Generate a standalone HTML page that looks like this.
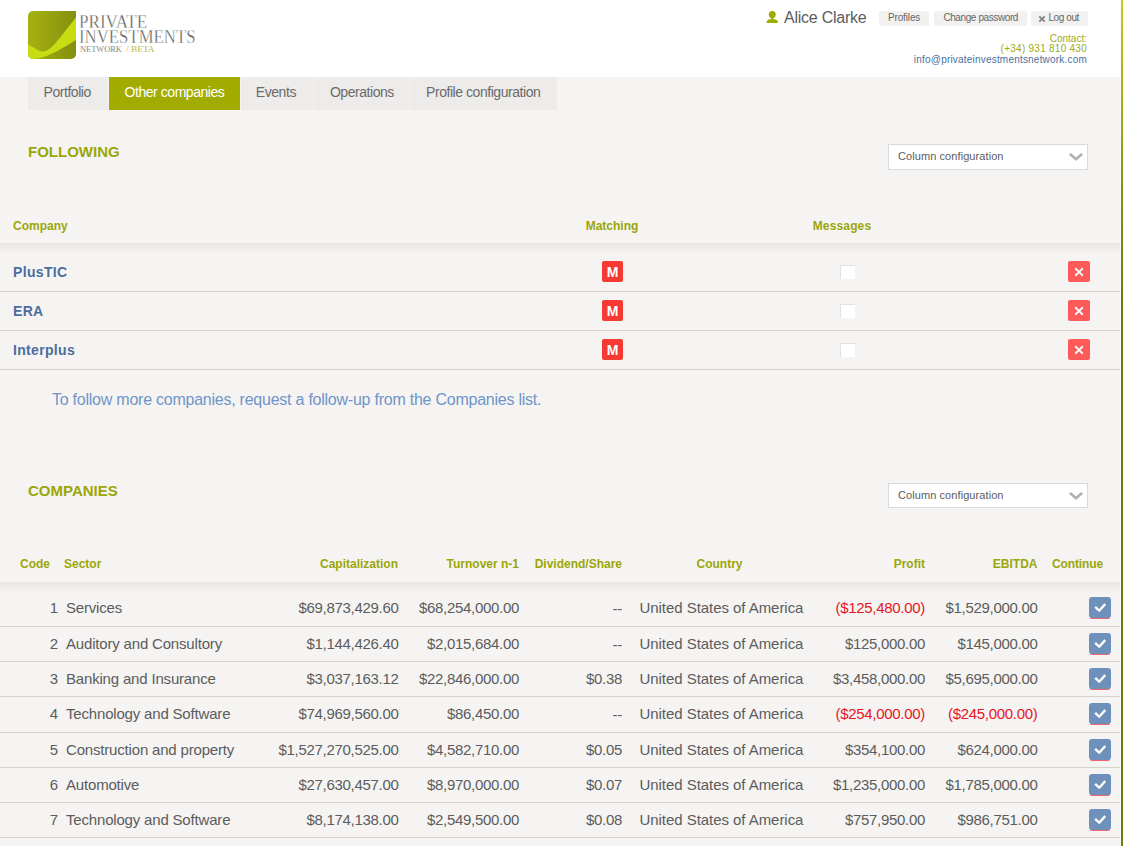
<!DOCTYPE html>
<html><head><meta charset="utf-8"><style>
html,body{margin:0;padding:0;}
body{width:1123px;height:846px;overflow:hidden;position:relative;background:#f5f4f2;font-family:"Liberation Sans",sans-serif;}
.t{position:absolute;white-space:nowrap;}
</style></head><body>
<div style="position:absolute;left:0px;top:0px;width:1121px;height:77px;background:#fff;"></div>
<div style="position:absolute;left:1120px;top:0px;width:1px;height:846px;background:#fafafc;"></div>
<div style="position:absolute;left:1121px;top:0px;width:2px;height:846px;background:linear-gradient(#c4ce12 0px,#a5b010 98px,#84900e 198px,#717c0a 300px,#717c0a 846px);"></div>
<svg style="position:absolute;left:28px;top:11px" width="48" height="48" viewBox="0 0 48 48">
<defs><linearGradient id="lg" x1="0" x2="1" y1="0" y2="0"><stop offset="0" stop-color="#a6b212"/><stop offset="1" stop-color="#858f0e"/></linearGradient>
<clipPath id="cp"><path d="M5 0H48V43A5 5 0 0 1 43 48H5A5 5 0 0 1 0 43V5A5 5 0 0 1 5 0Z"/></clipPath></defs>
<g clip-path="url(#cp)"><rect width="48" height="48" fill="url(#lg)"/>
<path d="M0 33.5C6 36 10 40.5 15 40.5C24 40.5 33 24 48 6.5V29C36 36 22 46 6 48H0Z" fill="#c8dc14"/></g></svg>
<div class="t" style="top:11.50px;font-size:19px;line-height:19px;font-weight:400;color:#5e5e5e;left:79px;transform:scaleX(0.9);transform-origin:left;font-family:'Liberation Serif',serif;-webkit-text-stroke:0.35px #fff;">PRIVATE</div>
<div class="t" style="top:26.70px;font-size:19px;line-height:19px;font-weight:400;color:#5e5e5e;left:79px;transform:scaleX(0.883);transform-origin:left;font-family:'Liberation Serif',serif;-webkit-text-stroke:0.35px #fff;">INVESTMENTS</div>
<div class="t" style="top:44.70px;font-size:9px;line-height:9px;font-weight:400;color:#707070;left:79.5px;transform:scaleX(0.93);transform-origin:left;font-family:'Liberation Serif',serif;-webkit-text-stroke:0.1px #fff;">NETWORK</div>
<div class="t" style="top:44.70px;font-size:9px;line-height:9px;font-weight:400;color:#a8b020;left:125.5px;transform:scaleX(1.04);transform-origin:left;font-family:'Liberation Serif',serif;-webkit-text-stroke:0.1px #fff;">/ BETA</div>
<svg style="position:absolute;left:766px;top:11px" width="13" height="12" viewBox="0 0 13 12">
<ellipse cx="6.25" cy="3.6" rx="3.5" ry="3.6" fill="#9ead00"/><rect x="5.2" y="6" width="2.1" height="3" fill="#9ead00"/><path d="M0.5 12C0.7 9.6 1.9 8.3 4.3 8.3H8.2C10.6 8.3 11.8 9.6 12 12Z" fill="#9ead00"/></svg>
<div class="t" style="top:9.90px;font-size:16px;line-height:16px;font-weight:400;color:#5c5c5c;letter-spacing:-0.25px;left:784px;">Alice Clarke</div>
<div style="position:absolute;left:879px;top:11px;width:50px;height:15px;background:#f2f1ef;border-radius:2px;"></div>
<div style="position:absolute;left:934px;top:11px;width:93px;height:15px;background:#f2f1ef;border-radius:2px;"></div>
<div style="position:absolute;left:1031px;top:11px;width:57px;height:15px;background:#f2f1ef;border-radius:2px;"></div>
<div class="t" style="top:12.50px;font-size:10px;line-height:10px;font-weight:400;color:#666;letter-spacing:-0.15px;left:888px;">Profiles</div>
<div class="t" style="top:12.50px;font-size:10px;line-height:10px;font-weight:400;color:#666;letter-spacing:-0.4px;left:943.4px;">Change password</div>
<div class="t" style="top:12.50px;font-size:10px;line-height:10px;font-weight:400;color:#666;letter-spacing:-0.4px;left:1048.4px;">Log out</div>
<svg style="position:absolute;left:1038px;top:15px" width="8" height="8" viewBox="0 0 8 8"><path d="M1.3 1.3L6.7 6.7M6.7 1.3L1.3 6.7" stroke="#858585" stroke-width="1.8"/></svg>
<div class="t" style="top:34.30px;font-size:10px;line-height:10px;font-weight:400;color:#a2a916;right:36px;text-align:right;">Contact:</div>
<div class="t" style="top:44.10px;font-size:10px;line-height:10px;font-weight:400;color:#a2a916;letter-spacing:0.26px;right:36px;text-align:right;">(+34) 931 810 430</div>
<div class="t" style="top:54.60px;font-size:10px;line-height:10px;font-weight:400;color:#4a6fa0;letter-spacing:0.2px;right:36px;text-align:right;">info@privateinvestmentsnetwork.com</div>
<div style="position:absolute;left:28px;top:77px;width:80px;height:33px;background:#edeceb;"></div>
<div class="t" style="top:84.70px;font-size:14px;line-height:14px;font-weight:400;color:#6a6a6a;letter-spacing:-0.45px;left:-132.8px;width:400px;text-align:center;">Portfolio</div>
<div style="position:absolute;left:109px;top:77px;width:131px;height:33px;background:#a2ac00;"></div>
<div class="t" style="top:84.70px;font-size:14px;line-height:14px;font-weight:400;color:#fff;letter-spacing:-0.45px;left:-25.5px;width:400px;text-align:center;">Other companies</div>
<div style="position:absolute;left:241px;top:77px;width:72px;height:33px;background:#edeceb;"></div>
<div class="t" style="top:84.70px;font-size:14px;line-height:14px;font-weight:400;color:#6a6a6a;letter-spacing:-0.45px;left:75.89999999999998px;width:400px;text-align:center;">Events</div>
<div style="position:absolute;left:314px;top:77px;width:95px;height:33px;background:#edeceb;"></div>
<div class="t" style="top:84.70px;font-size:14px;line-height:14px;font-weight:400;color:#6a6a6a;letter-spacing:-0.45px;left:161.89999999999998px;width:400px;text-align:center;">Operations</div>
<div style="position:absolute;left:410px;top:77px;width:147px;height:33px;background:#edeceb;"></div>
<div class="t" style="top:84.70px;font-size:14px;line-height:14px;font-weight:400;color:#6a6a6a;letter-spacing:-0.45px;left:283.2px;width:400px;text-align:center;">Profile configuration</div>
<div class="t" style="top:144.00px;font-size:15px;line-height:15px;font-weight:700;color:#9ba60a;left:28px;">FOLLOWING</div>
<div style="position:absolute;left:888px;top:144px;width:198px;height:24px;background:#fff;border:1px solid #dadada;"></div>
<div class="t" style="top:150.50px;font-size:11px;line-height:11px;font-weight:400;color:#5c5c5c;letter-spacing:0.08px;left:898px;">Column configuration</div>
<svg style="position:absolute;left:1069px;top:152px" width="14" height="10" viewBox="0 0 14 10"><path d="M1.6 2.6L7 7.3L12.4 2.6" stroke="#b0b0b0" stroke-width="2.6" fill="none" stroke-linecap="round" stroke-linejoin="round"/></svg>
<div class="t" style="top:483.00px;font-size:15px;line-height:15px;font-weight:700;color:#9ba60a;left:28px;">COMPANIES</div>
<div style="position:absolute;left:888px;top:483px;width:198px;height:23px;background:#fff;border:1px solid #dadada;"></div>
<div class="t" style="top:489.50px;font-size:11px;line-height:11px;font-weight:400;color:#5c5c5c;letter-spacing:0.08px;left:898px;">Column configuration</div>
<svg style="position:absolute;left:1069px;top:491px" width="14" height="10" viewBox="0 0 14 10"><path d="M1.6 2.6L7 7.3L12.4 2.6" stroke="#b0b0b0" stroke-width="2.6" fill="none" stroke-linecap="round" stroke-linejoin="round"/></svg>
<div class="t" style="top:220.00px;font-size:12px;line-height:12px;font-weight:700;color:#9ba60a;left:13px;">Company</div>
<div class="t" style="top:220.00px;font-size:12px;line-height:12px;font-weight:700;color:#9ba60a;left:412px;width:400px;text-align:center;">Matching</div>
<div class="t" style="top:220.00px;font-size:12px;line-height:12px;font-weight:700;color:#9ba60a;letter-spacing:0.15px;left:642px;width:400px;text-align:center;">Messages</div>
<div style="position:absolute;left:0px;top:243px;width:1120px;height:12px;background:linear-gradient(#e9e8e6,#f5f4f2);"></div>
<div style="position:absolute;left:0px;top:291px;width:1120px;height:1px;background:#d6d1cb;"></div>
<div class="t" style="top:264.70px;font-size:14px;line-height:14px;font-weight:700;color:#4b6e9e;letter-spacing:0.33px;left:13px;">PlusTIC</div>
<div style="position:absolute;left:602px;top:261px;width:21px;height:21px;background:#f63a33;border-radius:2px;"></div>
<div class="t" style="top:265.00px;font-size:14px;line-height:14px;font-weight:700;color:#fff;left:412.5px;width:400px;text-align:center;">M</div>
<div style="position:absolute;left:840px;top:265px;width:14px;height:13px;background:#fff;border-top:1px solid #e2e2e2;border-left:1px solid #e2e2e2;"></div>
<div style="position:absolute;left:1068px;top:261px;width:22px;height:21px;background:#ff5a5a;border-radius:2px;"></div>
<svg style="position:absolute;left:1074px;top:267px" width="10" height="10" viewBox="0 0 10 10"><path d="M5.00 3.66L8.08 0.58L9.42 1.92L6.34 5.00L9.42 8.08L8.08 9.42L5.00 6.34L1.92 9.42L0.58 8.08L3.66 5.00L0.58 1.92L1.92 0.58Z" fill="#fff"/></svg>
<div style="position:absolute;left:0px;top:330px;width:1120px;height:1px;background:#d6d1cb;"></div>
<div class="t" style="top:304.10px;font-size:14px;line-height:14px;font-weight:700;color:#4b6e9e;letter-spacing:0.33px;left:13px;">ERA</div>
<div style="position:absolute;left:602px;top:300px;width:21px;height:21px;background:#f63a33;border-radius:2px;"></div>
<div class="t" style="top:304.00px;font-size:14px;line-height:14px;font-weight:700;color:#fff;left:412.5px;width:400px;text-align:center;">M</div>
<div style="position:absolute;left:840px;top:304px;width:14px;height:13px;background:#fff;border-top:1px solid #e2e2e2;border-left:1px solid #e2e2e2;"></div>
<div style="position:absolute;left:1068px;top:300px;width:22px;height:21px;background:#ff5a5a;border-radius:2px;"></div>
<svg style="position:absolute;left:1074px;top:306px" width="10" height="10" viewBox="0 0 10 10"><path d="M5.00 3.66L8.08 0.58L9.42 1.92L6.34 5.00L9.42 8.08L8.08 9.42L5.00 6.34L1.92 9.42L0.58 8.08L3.66 5.00L0.58 1.92L1.92 0.58Z" fill="#fff"/></svg>
<div style="position:absolute;left:0px;top:369px;width:1120px;height:1px;background:#d6d1cb;"></div>
<div class="t" style="top:343.10px;font-size:14px;line-height:14px;font-weight:700;color:#4b6e9e;letter-spacing:0.33px;left:13px;">Interplus</div>
<div style="position:absolute;left:602px;top:339px;width:21px;height:21px;background:#f63a33;border-radius:2px;"></div>
<div class="t" style="top:343.00px;font-size:14px;line-height:14px;font-weight:700;color:#fff;left:412.5px;width:400px;text-align:center;">M</div>
<div style="position:absolute;left:840px;top:343px;width:14px;height:13px;background:#fff;border-top:1px solid #e2e2e2;border-left:1px solid #e2e2e2;"></div>
<div style="position:absolute;left:1068px;top:339px;width:22px;height:21px;background:#ff5a5a;border-radius:2px;"></div>
<svg style="position:absolute;left:1074px;top:345px" width="10" height="10" viewBox="0 0 10 10"><path d="M5.00 3.66L8.08 0.58L9.42 1.92L6.34 5.00L9.42 8.08L8.08 9.42L5.00 6.34L1.92 9.42L0.58 8.08L3.66 5.00L0.58 1.92L1.92 0.58Z" fill="#fff"/></svg>
<div class="t" style="top:392.10px;font-size:16px;line-height:16px;font-weight:400;color:#7094c9;letter-spacing:-0.24px;left:52px;">To follow more companies, request a follow-up from the Companies list.</div>
<div class="t" style="top:558.00px;font-size:12px;line-height:12px;font-weight:700;color:#9ba60a;left:20px;">Code</div>
<div class="t" style="top:558.00px;font-size:12px;line-height:12px;font-weight:700;color:#9ba60a;left:64px;">Sector</div>
<div class="t" style="top:558.00px;font-size:12px;line-height:12px;font-weight:700;color:#9ba60a;right:725px;text-align:right;">Capitalization</div>
<div class="t" style="top:558.00px;font-size:12px;line-height:12px;font-weight:700;color:#9ba60a;right:604px;text-align:right;">Turnover n-1</div>
<div class="t" style="top:558.00px;font-size:12px;line-height:12px;font-weight:700;color:#9ba60a;right:501px;text-align:right;">Dividend/Share</div>
<div class="t" style="top:558.00px;font-size:12px;line-height:12px;font-weight:700;color:#9ba60a;left:519.5px;width:400px;text-align:center;">Country</div>
<div class="t" style="top:558.00px;font-size:12px;line-height:12px;font-weight:700;color:#9ba60a;right:198px;text-align:right;">Profit</div>
<div class="t" style="top:558.00px;font-size:12px;line-height:12px;font-weight:700;color:#9ba60a;right:85.5px;text-align:right;">EBITDA</div>
<div class="t" style="top:558.00px;font-size:12px;line-height:12px;font-weight:700;color:#9ba60a;letter-spacing:-0.12px;left:1052px;">Continue</div>
<div style="position:absolute;left:0px;top:582px;width:1120px;height:12px;background:linear-gradient(#e9e8e6,#f5f4f2);"></div>
<div style="position:absolute;left:0px;top:626px;width:1120px;height:1px;background:#d6d1cb;"></div>
<div class="t" style="top:599.70px;font-size:15px;line-height:15px;font-weight:400;color:#5c5c5c;right:1065px;text-align:right;">1</div>
<div class="t" style="top:599.70px;font-size:15px;line-height:15px;font-weight:400;color:#5c5c5c;letter-spacing:-0.18px;left:66px;">Services</div>
<div class="t" style="top:599.70px;font-size:15px;line-height:15px;font-weight:400;color:#5c5c5c;letter-spacing:-0.3px;right:724.5px;text-align:right;">$69,873,429.60</div>
<div class="t" style="top:599.70px;font-size:15px;line-height:15px;font-weight:400;color:#5c5c5c;letter-spacing:-0.3px;right:604px;text-align:right;">$68,254,000.00</div>
<div class="t" style="top:600.70px;font-size:15px;line-height:15px;font-weight:400;color:#5c5c5c;letter-spacing:-0.3px;right:501px;text-align:right;">--</div>
<div class="t" style="top:599.70px;font-size:15px;line-height:15px;font-weight:400;color:#5c5c5c;letter-spacing:-0.05px;left:639.5px;">United States of America</div>
<div class="t" style="top:599.70px;font-size:15px;line-height:15px;font-weight:400;color:#e8141e;letter-spacing:-0.3px;right:198px;text-align:right;">($125,480.00)</div>
<div class="t" style="top:599.70px;font-size:15px;line-height:15px;font-weight:400;color:#5c5c5c;letter-spacing:-0.3px;right:85.5px;text-align:right;">$1,529,000.00</div>
<div style="position:absolute;left:1090px;top:617px;width:20px;height:2px;background:#f2636b;border-radius:0 0 3px 3px;"></div>
<div style="position:absolute;left:1089px;top:597px;width:22px;height:21px;background:#6e91bb;border-radius:3px;"></div>
<svg style="position:absolute;left:1094px;top:602px" width="12" height="11" viewBox="0 0 12 11"><path d="M1.2 4.9L5.2 8.8L11.2 2.1" stroke="#fff" stroke-width="2.3" fill="none" stroke-linejoin="round"/></svg>
<div style="position:absolute;left:0px;top:661px;width:1120px;height:1px;background:#d6d1cb;"></div>
<div class="t" style="top:635.70px;font-size:15px;line-height:15px;font-weight:400;color:#5c5c5c;right:1065px;text-align:right;">2</div>
<div class="t" style="top:635.70px;font-size:15px;line-height:15px;font-weight:400;color:#5c5c5c;letter-spacing:-0.18px;left:66px;">Auditory and Consultory</div>
<div class="t" style="top:635.70px;font-size:15px;line-height:15px;font-weight:400;color:#5c5c5c;letter-spacing:-0.3px;right:724.5px;text-align:right;">$1,144,426.40</div>
<div class="t" style="top:635.70px;font-size:15px;line-height:15px;font-weight:400;color:#5c5c5c;letter-spacing:-0.3px;right:604px;text-align:right;">$2,015,684.00</div>
<div class="t" style="top:636.70px;font-size:15px;line-height:15px;font-weight:400;color:#5c5c5c;letter-spacing:-0.3px;right:501px;text-align:right;">--</div>
<div class="t" style="top:635.70px;font-size:15px;line-height:15px;font-weight:400;color:#5c5c5c;letter-spacing:-0.05px;left:639.5px;">United States of America</div>
<div class="t" style="top:635.70px;font-size:15px;line-height:15px;font-weight:400;color:#5c5c5c;letter-spacing:-0.3px;right:198px;text-align:right;">$125,000.00</div>
<div class="t" style="top:635.70px;font-size:15px;line-height:15px;font-weight:400;color:#5c5c5c;letter-spacing:-0.3px;right:85.5px;text-align:right;">$145,000.00</div>
<div style="position:absolute;left:1090px;top:653px;width:20px;height:2px;background:#f2636b;border-radius:0 0 3px 3px;"></div>
<div style="position:absolute;left:1089px;top:633px;width:22px;height:21px;background:#6e91bb;border-radius:3px;"></div>
<svg style="position:absolute;left:1094px;top:638px" width="12" height="11" viewBox="0 0 12 11"><path d="M1.2 4.9L5.2 8.8L11.2 2.1" stroke="#fff" stroke-width="2.3" fill="none" stroke-linejoin="round"/></svg>
<div style="position:absolute;left:0px;top:696px;width:1120px;height:1px;background:#d6d1cb;"></div>
<div class="t" style="top:670.70px;font-size:15px;line-height:15px;font-weight:400;color:#5c5c5c;right:1065px;text-align:right;">3</div>
<div class="t" style="top:670.70px;font-size:15px;line-height:15px;font-weight:400;color:#5c5c5c;letter-spacing:-0.18px;left:66px;">Banking and Insurance</div>
<div class="t" style="top:670.70px;font-size:15px;line-height:15px;font-weight:400;color:#5c5c5c;letter-spacing:-0.3px;right:724.5px;text-align:right;">$3,037,163.12</div>
<div class="t" style="top:670.70px;font-size:15px;line-height:15px;font-weight:400;color:#5c5c5c;letter-spacing:-0.3px;right:604px;text-align:right;">$22,846,000.00</div>
<div class="t" style="top:670.70px;font-size:15px;line-height:15px;font-weight:400;color:#5c5c5c;letter-spacing:-0.3px;right:501px;text-align:right;">$0.38</div>
<div class="t" style="top:670.70px;font-size:15px;line-height:15px;font-weight:400;color:#5c5c5c;letter-spacing:-0.05px;left:639.5px;">United States of America</div>
<div class="t" style="top:670.70px;font-size:15px;line-height:15px;font-weight:400;color:#5c5c5c;letter-spacing:-0.3px;right:198px;text-align:right;">$3,458,000.00</div>
<div class="t" style="top:670.70px;font-size:15px;line-height:15px;font-weight:400;color:#5c5c5c;letter-spacing:-0.3px;right:85.5px;text-align:right;">$5,695,000.00</div>
<div style="position:absolute;left:1090px;top:688px;width:20px;height:2px;background:#f2636b;border-radius:0 0 3px 3px;"></div>
<div style="position:absolute;left:1089px;top:668px;width:22px;height:21px;background:#6e91bb;border-radius:3px;"></div>
<svg style="position:absolute;left:1094px;top:673px" width="12" height="11" viewBox="0 0 12 11"><path d="M1.2 4.9L5.2 8.8L11.2 2.1" stroke="#fff" stroke-width="2.3" fill="none" stroke-linejoin="round"/></svg>
<div style="position:absolute;left:0px;top:732px;width:1120px;height:1px;background:#d6d1cb;"></div>
<div class="t" style="top:705.70px;font-size:15px;line-height:15px;font-weight:400;color:#5c5c5c;right:1065px;text-align:right;">4</div>
<div class="t" style="top:705.70px;font-size:15px;line-height:15px;font-weight:400;color:#5c5c5c;letter-spacing:-0.18px;left:66px;">Technology and Software</div>
<div class="t" style="top:705.70px;font-size:15px;line-height:15px;font-weight:400;color:#5c5c5c;letter-spacing:-0.3px;right:724.5px;text-align:right;">$74,969,560.00</div>
<div class="t" style="top:705.70px;font-size:15px;line-height:15px;font-weight:400;color:#5c5c5c;letter-spacing:-0.3px;right:604px;text-align:right;">$86,450.00</div>
<div class="t" style="top:706.70px;font-size:15px;line-height:15px;font-weight:400;color:#5c5c5c;letter-spacing:-0.3px;right:501px;text-align:right;">--</div>
<div class="t" style="top:705.70px;font-size:15px;line-height:15px;font-weight:400;color:#5c5c5c;letter-spacing:-0.05px;left:639.5px;">United States of America</div>
<div class="t" style="top:705.70px;font-size:15px;line-height:15px;font-weight:400;color:#e8141e;letter-spacing:-0.3px;right:198px;text-align:right;">($254,000.00)</div>
<div class="t" style="top:705.70px;font-size:15px;line-height:15px;font-weight:400;color:#e8141e;letter-spacing:-0.3px;right:85.5px;text-align:right;">($245,000.00)</div>
<div style="position:absolute;left:1090px;top:723px;width:20px;height:2px;background:#f2636b;border-radius:0 0 3px 3px;"></div>
<div style="position:absolute;left:1089px;top:703px;width:22px;height:21px;background:#6e91bb;border-radius:3px;"></div>
<svg style="position:absolute;left:1094px;top:708px" width="12" height="11" viewBox="0 0 12 11"><path d="M1.2 4.9L5.2 8.8L11.2 2.1" stroke="#fff" stroke-width="2.3" fill="none" stroke-linejoin="round"/></svg>
<div style="position:absolute;left:0px;top:767px;width:1120px;height:1px;background:#d6d1cb;"></div>
<div class="t" style="top:741.70px;font-size:15px;line-height:15px;font-weight:400;color:#5c5c5c;right:1065px;text-align:right;">5</div>
<div class="t" style="top:741.70px;font-size:15px;line-height:15px;font-weight:400;color:#5c5c5c;letter-spacing:-0.18px;left:66px;">Construction and property</div>
<div class="t" style="top:741.70px;font-size:15px;line-height:15px;font-weight:400;color:#5c5c5c;letter-spacing:-0.3px;right:724.5px;text-align:right;">$1,527,270,525.00</div>
<div class="t" style="top:741.70px;font-size:15px;line-height:15px;font-weight:400;color:#5c5c5c;letter-spacing:-0.3px;right:604px;text-align:right;">$4,582,710.00</div>
<div class="t" style="top:741.70px;font-size:15px;line-height:15px;font-weight:400;color:#5c5c5c;letter-spacing:-0.3px;right:501px;text-align:right;">$0.05</div>
<div class="t" style="top:741.70px;font-size:15px;line-height:15px;font-weight:400;color:#5c5c5c;letter-spacing:-0.05px;left:639.5px;">United States of America</div>
<div class="t" style="top:741.70px;font-size:15px;line-height:15px;font-weight:400;color:#5c5c5c;letter-spacing:-0.3px;right:198px;text-align:right;">$354,100.00</div>
<div class="t" style="top:741.70px;font-size:15px;line-height:15px;font-weight:400;color:#5c5c5c;letter-spacing:-0.3px;right:85.5px;text-align:right;">$624,000.00</div>
<div style="position:absolute;left:1090px;top:759px;width:20px;height:2px;background:#f2636b;border-radius:0 0 3px 3px;"></div>
<div style="position:absolute;left:1089px;top:739px;width:22px;height:21px;background:#6e91bb;border-radius:3px;"></div>
<svg style="position:absolute;left:1094px;top:744px" width="12" height="11" viewBox="0 0 12 11"><path d="M1.2 4.9L5.2 8.8L11.2 2.1" stroke="#fff" stroke-width="2.3" fill="none" stroke-linejoin="round"/></svg>
<div style="position:absolute;left:0px;top:802px;width:1120px;height:1px;background:#d6d1cb;"></div>
<div class="t" style="top:776.70px;font-size:15px;line-height:15px;font-weight:400;color:#5c5c5c;right:1065px;text-align:right;">6</div>
<div class="t" style="top:776.70px;font-size:15px;line-height:15px;font-weight:400;color:#5c5c5c;letter-spacing:-0.18px;left:66px;">Automotive</div>
<div class="t" style="top:776.70px;font-size:15px;line-height:15px;font-weight:400;color:#5c5c5c;letter-spacing:-0.3px;right:724.5px;text-align:right;">$27,630,457.00</div>
<div class="t" style="top:776.70px;font-size:15px;line-height:15px;font-weight:400;color:#5c5c5c;letter-spacing:-0.3px;right:604px;text-align:right;">$8,970,000.00</div>
<div class="t" style="top:776.70px;font-size:15px;line-height:15px;font-weight:400;color:#5c5c5c;letter-spacing:-0.3px;right:501px;text-align:right;">$0.07</div>
<div class="t" style="top:776.70px;font-size:15px;line-height:15px;font-weight:400;color:#5c5c5c;letter-spacing:-0.05px;left:639.5px;">United States of America</div>
<div class="t" style="top:776.70px;font-size:15px;line-height:15px;font-weight:400;color:#5c5c5c;letter-spacing:-0.3px;right:198px;text-align:right;">$1,235,000.00</div>
<div class="t" style="top:776.70px;font-size:15px;line-height:15px;font-weight:400;color:#5c5c5c;letter-spacing:-0.3px;right:85.5px;text-align:right;">$1,785,000.00</div>
<div style="position:absolute;left:1090px;top:794px;width:20px;height:2px;background:#f2636b;border-radius:0 0 3px 3px;"></div>
<div style="position:absolute;left:1089px;top:774px;width:22px;height:21px;background:#6e91bb;border-radius:3px;"></div>
<svg style="position:absolute;left:1094px;top:779px" width="12" height="11" viewBox="0 0 12 11"><path d="M1.2 4.9L5.2 8.8L11.2 2.1" stroke="#fff" stroke-width="2.3" fill="none" stroke-linejoin="round"/></svg>
<div style="position:absolute;left:0px;top:837px;width:1120px;height:1px;background:#d6d1cb;"></div>
<div class="t" style="top:811.70px;font-size:15px;line-height:15px;font-weight:400;color:#5c5c5c;right:1065px;text-align:right;">7</div>
<div class="t" style="top:811.70px;font-size:15px;line-height:15px;font-weight:400;color:#5c5c5c;letter-spacing:-0.18px;left:66px;">Technology and Software</div>
<div class="t" style="top:811.70px;font-size:15px;line-height:15px;font-weight:400;color:#5c5c5c;letter-spacing:-0.3px;right:724.5px;text-align:right;">$8,174,138.00</div>
<div class="t" style="top:811.70px;font-size:15px;line-height:15px;font-weight:400;color:#5c5c5c;letter-spacing:-0.3px;right:604px;text-align:right;">$2,549,500.00</div>
<div class="t" style="top:811.70px;font-size:15px;line-height:15px;font-weight:400;color:#5c5c5c;letter-spacing:-0.3px;right:501px;text-align:right;">$0.08</div>
<div class="t" style="top:811.70px;font-size:15px;line-height:15px;font-weight:400;color:#5c5c5c;letter-spacing:-0.05px;left:639.5px;">United States of America</div>
<div class="t" style="top:811.70px;font-size:15px;line-height:15px;font-weight:400;color:#5c5c5c;letter-spacing:-0.3px;right:198px;text-align:right;">$757,950.00</div>
<div class="t" style="top:811.70px;font-size:15px;line-height:15px;font-weight:400;color:#5c5c5c;letter-spacing:-0.3px;right:85.5px;text-align:right;">$986,751.00</div>
<div style="position:absolute;left:1090px;top:829px;width:20px;height:2px;background:#f2636b;border-radius:0 0 3px 3px;"></div>
<div style="position:absolute;left:1089px;top:809px;width:22px;height:21px;background:#6e91bb;border-radius:3px;"></div>
<svg style="position:absolute;left:1094px;top:814px" width="12" height="11" viewBox="0 0 12 11"><path d="M1.2 4.9L5.2 8.8L11.2 2.1" stroke="#fff" stroke-width="2.3" fill="none" stroke-linejoin="round"/></svg>
</body></html>
